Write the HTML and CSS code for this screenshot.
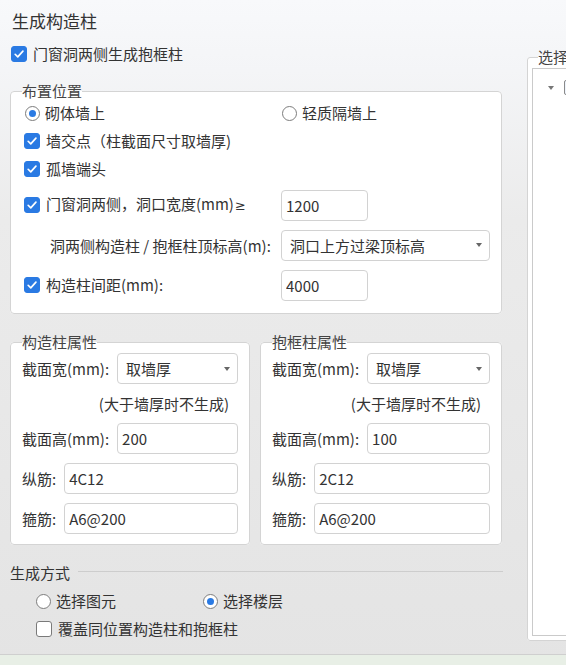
FILE: index.html
```html
<!DOCTYPE html>
<html lang="zh-CN">
<head>
    <meta charset="UTF-8">
    <meta name="viewport" content="width=device-width, initial-scale=1.0">
    <title>生成构造柱</title>
    <link rel="stylesheet" href="styles.css">
</head>
<body>
    <div class="dialog">
        <div class="left-col">
            <div class="title">生成构造柱</div>
            <label class="check top-check">
                <span class="cb on"><svg viewBox="0 0 16 16"><path d="M3.6 8.3l3 3 5.9-6.6"/></svg></span>门窗洞两侧生成抱框柱
            </label>

            <fieldset class="group place-group">
                <legend>布置位置</legend>
                <div class="row">
                    <div class="row-label">
                        <label class="radio"><span class="rb on"></span>砌体墙上</label>
                    </div>
                    <label class="radio"><span class="rb"></span>轻质隔墙上</label>
                </div>
                <div class="row">
                    <label class="check"><span class="cb on"><svg viewBox="0 0 16 16"><path d="M3.6 8.3l3 3 5.9-6.6"/></svg></span>墙交点（柱截面尺寸取墙厚)</label>
                </div>
                <div class="row">
                    <label class="check"><span class="cb on"><svg viewBox="0 0 16 16"><path d="M3.6 8.3l3 3 5.9-6.6"/></svg></span>孤墙端头</label>
                </div>
                <div class="row tall first-tall">
                    <div class="row-label">
                        <label class="check"><span class="cb on"><svg viewBox="0 0 16 16"><path d="M3.6 8.3l3 3 5.9-6.6"/></svg></span><span>门窗洞两侧，洞口宽度(mm)<span class="ge">≥</span></span></label>
                    </div>
                    <input class="field short" type="text" value="1200">
                </div>
                <div class="row tall">
                    <div class="row-label indent">洞两侧构造柱 / 抱框柱顶标高(m):</div>
                    <div class="select wide"><span>洞口上方过梁顶标高</span><i class="arrow"></i></div>
                </div>
                <div class="row tall">
                    <div class="row-label">
                        <label class="check"><span class="cb on"><svg viewBox="0 0 16 16"><path d="M3.6 8.3l3 3 5.9-6.6"/></svg></span>构造柱间距(mm):</label>
                    </div>
                    <input class="field short" type="text" value="4000">
                </div>
            </fieldset>

            <div class="props">
                <fieldset class="group prop-group">
                    <legend>构造柱属性</legend>
                    <div class="prop-row first">
                        <span>截面宽(mm):</span>
                        <div class="select"><span>取墙厚</span><i class="arrow"></i></div>
                    </div>
                    <div class="hint">(大于墙厚时不生成)</div>
                    <div class="prop-row">
                        <span>截面高(mm):</span>
                        <input class="field" type="text" value="200">
                    </div>
                    <div class="prop-row">
                        <span>纵筋:</span>
                        <input class="field" type="text" value="4C12">
                    </div>
                    <div class="prop-row">
                        <span>箍筋:</span>
                        <input class="field" type="text" value="A6@200">
                    </div>
                </fieldset>
                <fieldset class="group prop-group right">
                    <legend>抱框柱属性</legend>
                    <div class="prop-row first">
                        <span>截面宽(mm):</span>
                        <div class="select"><span>取墙厚</span><i class="arrow"></i></div>
                    </div>
                    <div class="hint">(大于墙厚时不生成)</div>
                    <div class="prop-row">
                        <span>截面高(mm):</span>
                        <input class="field" type="text" value="100">
                    </div>
                    <div class="prop-row">
                        <span>纵筋:</span>
                        <input class="field" type="text" value="2C12">
                    </div>
                    <div class="prop-row">
                        <span>箍筋:</span>
                        <input class="field" type="text" value="A6@200">
                    </div>
                </fieldset>
            </div>

            <div class="section-head">
                <span>生成方式</span>
                <div class="section-line"></div>
            </div>
            <div class="mode-row">
                <label class="radio mode-first"><span class="rb"></span>选择图元</label>
                <label class="radio"><span class="rb on"></span>选择楼层</label>
            </div>
            <div class="mode-row check-row">
                <label class="check"><span class="cb"></span>覆盖同位置构造柱和抱框柱</label>
            </div>
        </div>

        <fieldset class="select-panel">
            <legend>选择</legend>
            <div class="tree">
                <div class="tree-row">
                    <i class="tree-arrow"></i>
                    <span class="tree-box"></span>
                </div>
            </div>
        </fieldset>
    </div>
    <div class="footer"></div>
</body>
</html>
```

FILE: styles.css
```css
* {
    box-sizing: border-box;
}

html, body {
    margin: 0;
    height: 100%;
}

body {
    overflow: hidden;
    font-family: "Noto Sans CJK SC", "Microsoft YaHei", sans-serif;
    font-size: 15px;
    color: #333;
    background: linear-gradient(180deg, #f8f9fb 0, #f4f5f7 70px, #ebebeb 220px, #e4e4e4 100%);
}

.dialog {
    display: flex;
    align-items: flex-start;
    height: 654px;
    padding-left: 10px;
    overflow: hidden;
}

.left-col {
    width: 492px;
    flex-shrink: 0;
    padding-top: 9px;
}

.title {
    font-size: 17px;
    line-height: 24px;
    padding-left: 2px;
}

/* чекбоксы и радио */
.check, .radio {
    display: flex;
    align-items: center;
    line-height: 20px;
    white-space: nowrap;
}

.check {
    gap: 6px;
}

.radio {
    gap: 5px;
}

.ge {
    margin-left: 1px;
    font-family: "DejaVu Sans", sans-serif;
    font-size: 13px;
}

.cb {
    width: 16px;
    height: 16px;
    flex-shrink: 0;
    border: 1px solid #7a7a7a;
    border-radius: 3px;
    background: #fff;
}

.cb.on {
    border-color: #2a7ae3;
    background: #2a7ae3;
}

.cb svg {
    display: block;
    width: 14px;
    height: 14px;
    fill: none;
    stroke: #fff;
    stroke-width: 1.9;
    stroke-linecap: round;
    stroke-linejoin: round;
}

.rb {
    width: 15px;
    height: 15px;
    flex-shrink: 0;
    display: flex;
    align-items: center;
    justify-content: center;
    border: 1px solid #7d7d7d;
    border-radius: 50%;
    background: #fff;
}

.rb.on::after {
    content: "";
    width: 7px;
    height: 7px;
    border-radius: 50%;
    background: #2a7ae3;
}

.top-check {
    height: 24px;
    margin-top: 9px;
    margin-left: 1px;
}

/* группы */
.group {
    margin: 0;
    min-width: 0;
    border: 1px solid #d4d4d4;
    border-radius: 4px;
    background: #fff;
}

.group legend {
    padding: 0;
    line-height: 16px;
    color: #444;
}

.place-group {
    margin-top: 17px;
    padding: 0 11px 8px 13px;
}

.place-group legend {
    margin-left: -2px;
}

.row {
    display: flex;
    align-items: center;
    height: 28px;
}

.row .radio {
    margin-left: 1px;
}

.row.tall {
    height: 40px;
}

.row.first-tall {
    margin-top: 2px;
}

.row-label {
    width: 257px;
    flex-shrink: 0;
}

.row-label.indent {
    padding-left: 26px;
    white-space: nowrap;
}

.field {
    height: 31px;
    padding: 0 4px;
    border: 1px solid #d2d2d2;
    border-radius: 4px;
    background: #fff;
    font: inherit;
    color: #333;
    outline: none;
}

.field.short {
    width: 87px;
}

.select {
    display: flex;
    align-items: center;
    justify-content: space-between;
    height: 31px;
    padding: 0 7px 0 8px;
    border: 1px solid #d2d2d2;
    border-radius: 4px;
    background: #fff;
}

.select.wide {
    flex: 1;
}

.arrow {
    width: 0;
    height: 0;
    border-left: 3px solid transparent;
    border-right: 3px solid transparent;
    border-top: 4px solid #666;
}

/* свойства колонн */
.props {
    display: flex;
    gap: 10px;
    margin-top: 20px;
}

.prop-group {
    width: 240px;
    padding: 0 11px 10px 11px;
}

.prop-group.right {
    width: 242px;
}

.prop-row {
    display: flex;
    align-items: center;
    gap: 8px;
    margin-top: 9px;
    white-space: nowrap;
}

.prop-row.first {
    margin-top: 3px;
}

.prop-row .field,
.prop-row .select {
    flex: 1;
    min-width: 0;
    width: 0;
}

.hint {
    margin: 10px 0 0;
    padding-right: 9px;
    line-height: 20px;
    text-align: right;
}

/* способ генерации */
.section-head {
    display: flex;
    align-items: center;
    gap: 8px;
    height: 20px;
    margin-top: 17px;
}

.section-line {
    flex: 1;
    height: 1px;
    margin-top: -2px;
    margin-right: -1px;
    background: #cdcdcd;
}

.mode-row {
    display: flex;
    align-items: center;
    height: 24px;
    margin-top: 7px;
    padding-left: 26px;
}

.mode-first {
    width: 167px;
}

.mode-row.check-row {
    margin-top: 4px;
}

/* правая панель выбора */
.select-panel {
    flex-shrink: 0;
    width: 90px;
    margin: 49px 0 0 25px;
    padding: 0 0 4px 4px;
    border: 1px solid #d4d4d4;
    border-radius: 3px;
    background: #fff;
}

.select-panel legend {
    margin-left: 6px;
    padding: 0;
    line-height: 16px;
    color: #444;
    white-space: nowrap;
}

.tree {
    height: 568px;
    margin-top: 3px;
    padding: 11px 0 0 15px;
    border: 1px solid #cacaca;
    background: #fff;
}

.tree-row {
    display: flex;
    align-items: center;
    gap: 10px;
}

.tree-arrow {
    width: 0;
    height: 0;
    border-left: 3px solid transparent;
    border-right: 3px solid transparent;
    border-top: 4px solid #777;
}

.tree-box {
    width: 15px;
    height: 15px;
    border: 1px solid #8a8a8a;
    border-radius: 2px;
    background: #eef4fc;
}

.footer {
    height: 11px;
    border-top: 1px solid #cfcfcf;
    background: #e8efe6;
}
```
